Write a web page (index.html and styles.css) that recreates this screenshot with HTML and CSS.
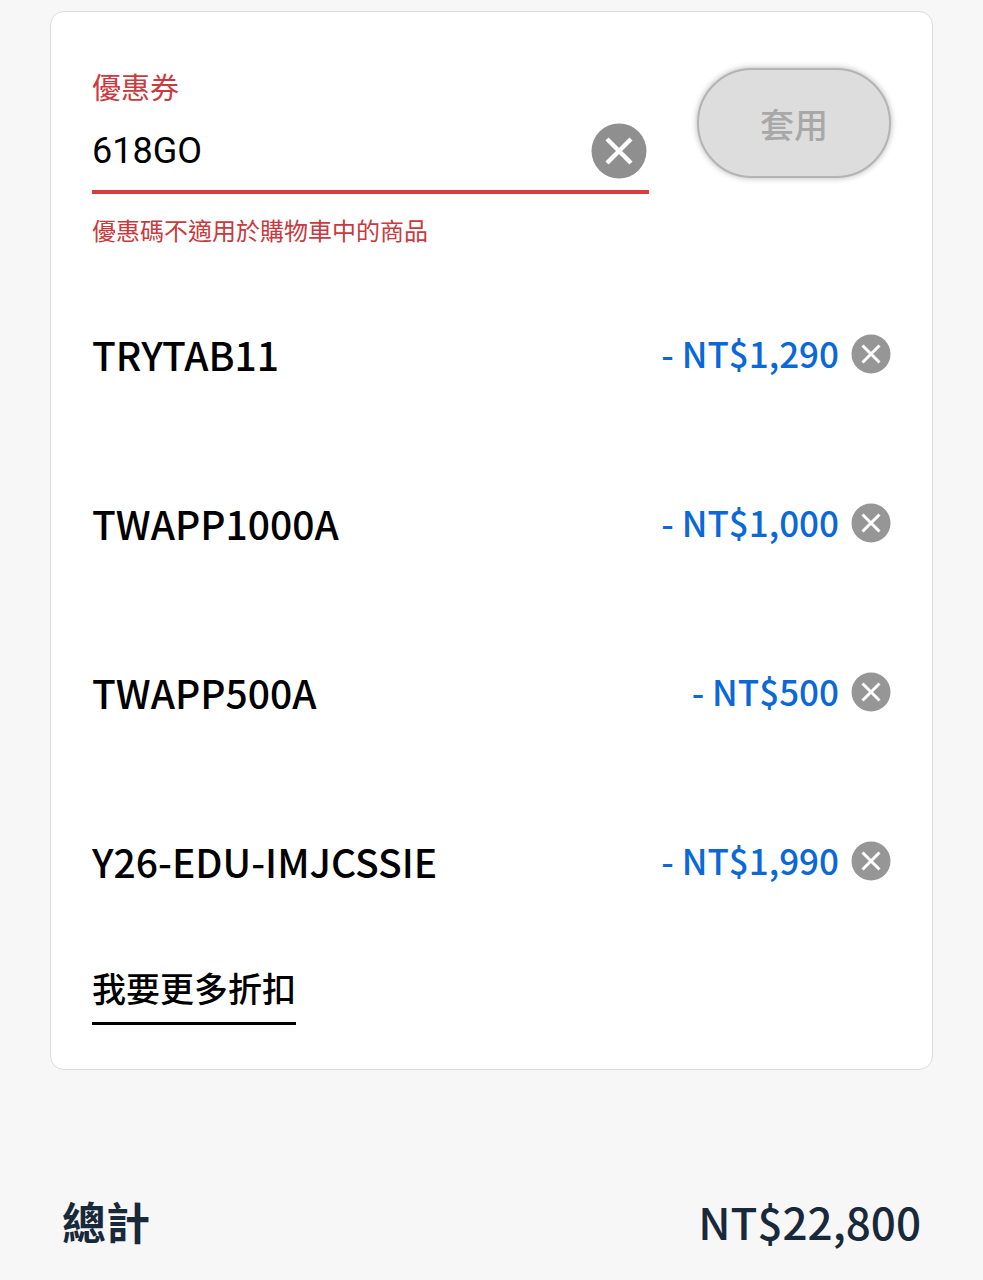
FILE: index.html
```html
<!DOCTYPE html>
<html lang="zh-Hant">
<head>
  <meta charset="UTF-8">
  <meta name="viewport" content="width=device-width, initial-scale=1">
  <title>優惠券</title>
  <link rel="stylesheet" href="styles.css">
</head>
<body>
  <main class="cart">
    <section class="card">
      <form class="coupon-form">
        <div class="coupon-field">
          <label for="coupon">優惠券</label>
          <div class="input-wrap">
            <input type="text" id="coupon" value="618GO" aria-describedby="couponError">
            <button type="button" class="clear-btn" aria-label="清除">
              <svg viewBox="0 0 56 56"><circle cx="28" cy="28" r="27.5" fill="#8f8f8f"/><path d="M16 16l24 24M40 16l-24 24" stroke="#fff" stroke-width="4.4"/></svg>
            </button>
          </div>
          <p class="error" id="couponError">優惠碼不適用於購物車中的商品</p>
        </div>
        <button type="submit" class="apply-btn" disabled>套用</button>
      </form>

      <ul class="coupon-list">
        <li class="coupon-item">
          <span class="code">TRYTAB11</span>
          <span class="amount">- NT$1,290</span>
          <button type="button" class="remove-btn" aria-label="移除 TRYTAB11">
            <svg viewBox="0 0 40 40"><circle cx="20" cy="20" r="19.5" fill="#969696"/><path d="M11.5 11.5l17 17M28.5 11.5l-17 17" stroke="#fff" stroke-width="3"/></svg>
          </button>
        </li>
        <li class="coupon-item">
          <span class="code">TWAPP1000A</span>
          <span class="amount">- NT$1,000</span>
          <button type="button" class="remove-btn" aria-label="移除 TWAPP1000A">
            <svg viewBox="0 0 40 40"><circle cx="20" cy="20" r="19.5" fill="#969696"/><path d="M11.5 11.5l17 17M28.5 11.5l-17 17" stroke="#fff" stroke-width="3"/></svg>
          </button>
        </li>
        <li class="coupon-item">
          <span class="code">TWAPP500A</span>
          <span class="amount">- NT$500</span>
          <button type="button" class="remove-btn" aria-label="移除 TWAPP500A">
            <svg viewBox="0 0 40 40"><circle cx="20" cy="20" r="19.5" fill="#969696"/><path d="M11.5 11.5l17 17M28.5 11.5l-17 17" stroke="#fff" stroke-width="3"/></svg>
          </button>
        </li>
        <li class="coupon-item">
          <span class="code">Y26-EDU-IMJCSSIE</span>
          <span class="amount">- NT$1,990</span>
          <button type="button" class="remove-btn" aria-label="移除 Y26-EDU-IMJCSSIE">
            <svg viewBox="0 0 40 40"><circle cx="20" cy="20" r="19.5" fill="#969696"/><path d="M11.5 11.5l17 17M28.5 11.5l-17 17" stroke="#fff" stroke-width="3"/></svg>
          </button>
        </li>
      </ul>

      <a href="#" class="more-link">我要更多折扣</a>
    </section>

    <div class="total">
      <span class="total-label">總計</span>
      <span>NT$22,800</span>
    </div>
  </main>
</body>
</html>
```
FILE: styles.css
```css
* {
  box-sizing: border-box;
}
body {
  margin: 0;
  background-color: #f7f7f7;
  color: #000;
  font-family: "Noto Sans CJK TC", sans-serif;
}
.cart {
  padding: 11px 50px 20px;
}
.card {
  padding: 56px 41px 44px;
  background: #fff;
  border: 1px solid #dcdcdc;
  border-radius: 14px;
}

/* 優惠券輸入 */
.coupon-form {
  display: flex;
  align-items: flex-start;
  gap: 48px;
}
.coupon-field {
  flex: 1;
  min-width: 0;
}
.coupon-field label {
  display: block;
  margin-bottom: 10px;
  font-size: 29px;
  line-height: 36px;
  color: #cb3a3e;
}
.input-wrap {
  display: flex;
  align-items: center;
  height: 80px;
  padding: 0 2px 2px 0;
  border-bottom: 4px solid #d83c41;
}
.input-wrap input {
  flex: 1;
  min-width: 0;
  padding: 0;
  border: none;
  outline: none;
  background: none;
  font-family: Roboto, "Noto Sans CJK TC", sans-serif;
  font-size: 36px;
  color: #000;
}
button {
  padding: 0;
  border: none;
  background: none;
  font-family: inherit;
  cursor: pointer;
}
button svg {
  display: block;
  width: 100%;
  height: 100%;
}
.clear-btn {
  width: 56px;
  height: 56px;
}
.error {
  margin: 18px 0 0;
  font-size: 24px;
  line-height: 36px;
  color: #c9393d;
}
.apply-btn {
  width: 194px;
  height: 110px;
  border: 2px solid #b4b4b4;
  border-radius: 55px;
  background-color: #ddd;
  box-shadow: 0 0 6px rgba(0, 0, 0, 0.3);
  font-size: 34px;
  font-weight: 500;
  color: #a8a8a8;
  cursor: default;
}

/* 已套用的優惠 */
.coupon-list {
  margin: 21px 0 0;
  padding: 0;
  list-style: none;
}
.coupon-item {
  display: flex;
  align-items: center;
  height: 169px;
}
.code {
  flex: 1;
  font-size: 39px;
  font-weight: 500;
}
.amount {
  margin-right: 12px;
  padding-bottom: 3px;
  font-size: 35px;
  font-weight: 500;
  color: #0a68d8;
}
.remove-btn {
  width: 40px;
  height: 40px;
}
.more-link {
  display: inline-block;
  margin-top: 15px;
  padding-bottom: 6px;
  border-bottom: 3px solid #000;
  font-size: 34px;
  font-weight: 500;
  line-height: 56px;
  color: #000;
  text-decoration: none;
}

.total {
  display: flex;
  justify-content: space-between;
  margin-top: 119px;
  padding: 0 12px;
  font-size: 44px;
  font-weight: 500;
  line-height: 64px;
  color: #17293a;
}
.total-label {
  font-weight: 700;
}
```
